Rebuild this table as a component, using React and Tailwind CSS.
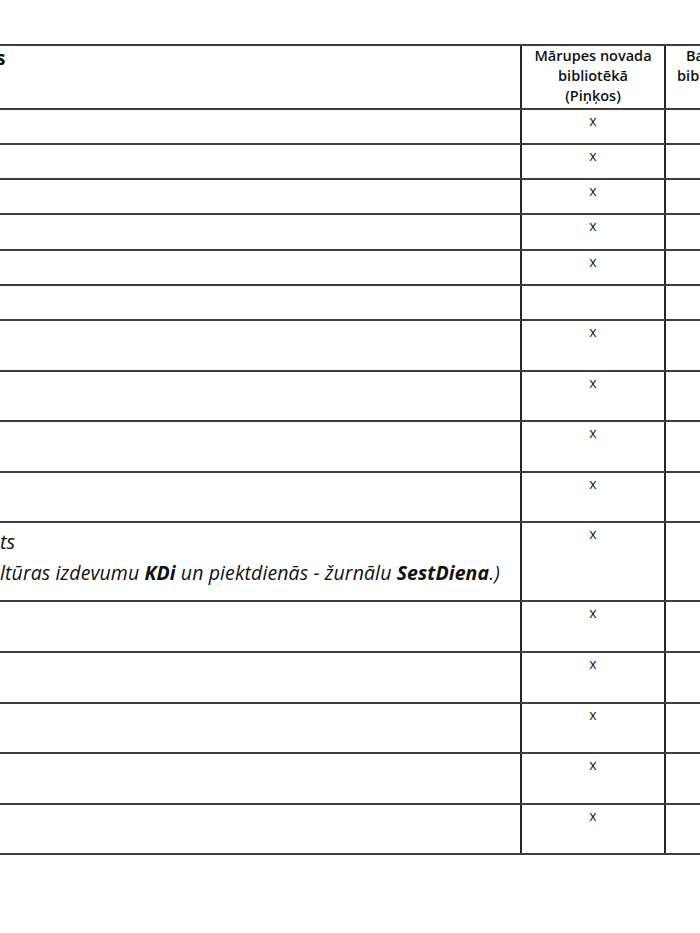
import React from "react";

const font = { fontFamily: "'Open Sans', 'Noto Sans', sans-serif" };

const rows = [
  { h: "h-[35px]", mark: true },
  { h: "h-[35px]", mark: true },
  { h: "h-[35px]", mark: true },
  { h: "h-[36px]", mark: true },
  { h: "h-[35px]", mark: true },
  { h: "h-[35px]", mark: false },
  { h: "h-[51px]", mark: true },
  { h: "h-[50px]", mark: true },
  { h: "h-[51px]", mark: true },
  { h: "h-[50px]", mark: true },
  {
    h: "h-[79px]",
    mark: true,
    left: (
      <div className="pt-[6px] italic text-[#111] whitespace-nowrap">
        <div className="text-[20px] leading-[26px]">ts</div>
        <div className="mt-[5px] text-[19.5px] leading-[26px] tracking-[0.1px]">
          ltūras izdevumu <b>KDi</b> un piektdienās - žurnālu <b>SestDiena</b>.)
        </div>
      </div>
    ),
  },
  { h: "h-[51px]", mark: true },
  { h: "h-[51px]", mark: true },
  { h: "h-[50px]", mark: true },
  { h: "h-[51px]", mark: true },
  { h: "h-[50px]", mark: true },
];

function Row({ h, mark, left }) {
  return (
    <div className={`flex border-b-2 border-[#3d3d3d] ${h}`}>
      <div className="w-[522px] shrink-0 overflow-hidden border-r-2 border-[#262626]">
        {left}
      </div>
      <div className="w-[144px] shrink-0 border-r-2 border-[#262626] pt-[1px] text-center text-[14px] leading-[20px] text-[#1a1a1a]">
        {mark ? "x" : ""}
      </div>
      <div className="w-[96px] shrink-0" />
    </div>
  );
}

export default function App() {
  return (
    <div className="w-[700px] h-[933px] overflow-hidden bg-white" style={font}>
      <div className="pt-[44px] w-[762px]">
        <div className="flex h-[66px] border-y-2 border-[#3d3d3d]">
          <div className="w-[522px] shrink-0 overflow-hidden border-r-2 border-[#262626]">
            <div className="-ml-[4px] text-[19px] leading-[24px] font-bold text-[#111]">s</div>
          </div>
          <div className="w-[144px] shrink-0 border-r-2 border-[#262626] text-center text-[14.5px] leading-[20px] font-semibold text-[#111]">
            Mārupes novada
            <br />
            bibliotēkā
            <br />
            (Piņķos)
          </div>
          <div className="w-[92px] shrink-0 text-center text-[14.5px] leading-[20px] font-semibold text-[#111]">
            Babītes
            <br />
            bibliotēkā
          </div>
        </div>
        {rows.map((r, i) => (
          <Row key={i} {...r} />
        ))}
      </div>
    </div>
  );
}
